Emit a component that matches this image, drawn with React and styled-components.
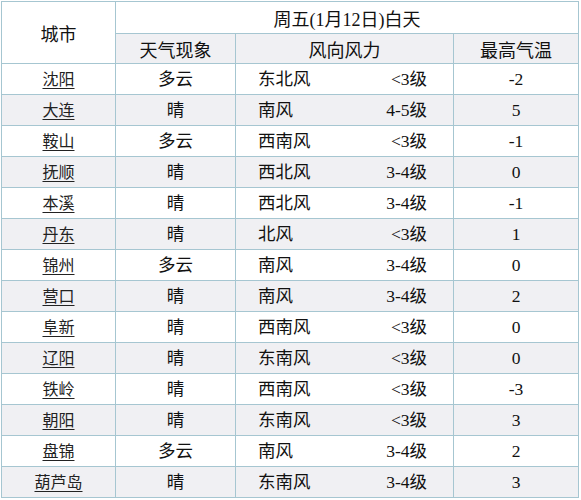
import styled, { createGlobalStyle } from "styled-components";

const GlobalStyle = createGlobalStyle`
  html, body {
    margin: 0;
    padding: 0;
    background: #ffffff;
  }
  body {
    font-family: "Liberation Serif", "Noto Sans CJK SC", serif;
    color: #111111;
  }
`;

const Page = styled.div`
  padding: 1px 0 0 1px;
  width: 581px;
  box-sizing: border-box;
`;

const Table = styled.table`
  border-collapse: collapse;
  table-layout: fixed;
  width: 577px;
`;

const Th = styled.th`
  border: 1px solid #a6c6d1;
  background: ${(p) => (p.$shade ? "#f0f0f3" : "#ffffff")};
  font-weight: 400;
  font-size: 18px;
  text-align: center;
  padding: 0;
  color: #111111;
`;

const HeadRow = styled.tr`
  height: ${(p) => p.$h}px;
`;

const Row = styled.tr`
  height: 31px;
  background: ${(p) => (p.$shade ? "#f0f0f3" : "#ffffff")};
`;

const Td = styled.td`
  border: 1px solid #a6c6d1;
  padding: 0;
  text-align: center;
  font-size: 17.5px;
  line-height: 20px;
`;

const City = styled.span`
  font-size: 16px;
  color: #222222;
  text-decoration: underline;
  text-underline-offset: 3px;
  text-decoration-thickness: 1px;
`;

const Wind = styled.div`
  display: flex;
  justify-content: space-between;
  align-items: center;
  padding: 0 26px 0 22px;
`;

const rows = [
  ["沈阳", "多云", "东北风", "<3级", "-2"],
  ["大连", "晴", "南风", "4-5级", "5"],
  ["鞍山", "多云", "西南风", "<3级", "-1"],
  ["抚顺", "晴", "西北风", "3-4级", "0"],
  ["本溪", "晴", "西北风", "3-4级", "-1"],
  ["丹东", "晴", "北风", "<3级", "1"],
  ["锦州", "多云", "南风", "3-4级", "0"],
  ["营口", "晴", "南风", "3-4级", "2"],
  ["阜新", "晴", "西南风", "<3级", "0"],
  ["辽阳", "晴", "东南风", "<3级", "0"],
  ["铁岭", "晴", "西南风", "<3级", "-3"],
  ["朝阳", "晴", "东南风", "<3级", "3"],
  ["盘锦", "多云", "南风", "3-4级", "2"],
  ["葫芦岛", "晴", "东南风", "3-4级", "3"],
];

export default function App() {
  return (
    <>
      <GlobalStyle />
      <Page>
        <Table>
          <colgroup>
            <col style={{ width: 114 }} />
            <col style={{ width: 120 }} />
            <col style={{ width: 218 }} />
            <col style={{ width: 125 }} />
          </colgroup>
          <thead>
            <HeadRow $h={32}>
              <Th rowSpan={2}>城市</Th>
              <Th colSpan={3}>周五(1月12日)白天</Th>
            </HeadRow>
            <HeadRow $h={30}>
              <Th $shade>天气现象</Th>
              <Th $shade>风向风力</Th>
              <Th $shade>最高气温</Th>
            </HeadRow>
          </thead>
          <tbody>
            {rows.map(([city, sky, dir, level, temp], i) => (
              <Row key={city} $shade={i % 2 === 1}>
                <Td>
                  <City>{city}</City>
                </Td>
                <Td>{sky}</Td>
                <Td>
                  <Wind>
                    <span>{dir}</span>
                    <span>{level}</span>
                  </Wind>
                </Td>
                <Td>{temp}</Td>
              </Row>
            ))}
          </tbody>
        </Table>
      </Page>
    </>
  );
}
